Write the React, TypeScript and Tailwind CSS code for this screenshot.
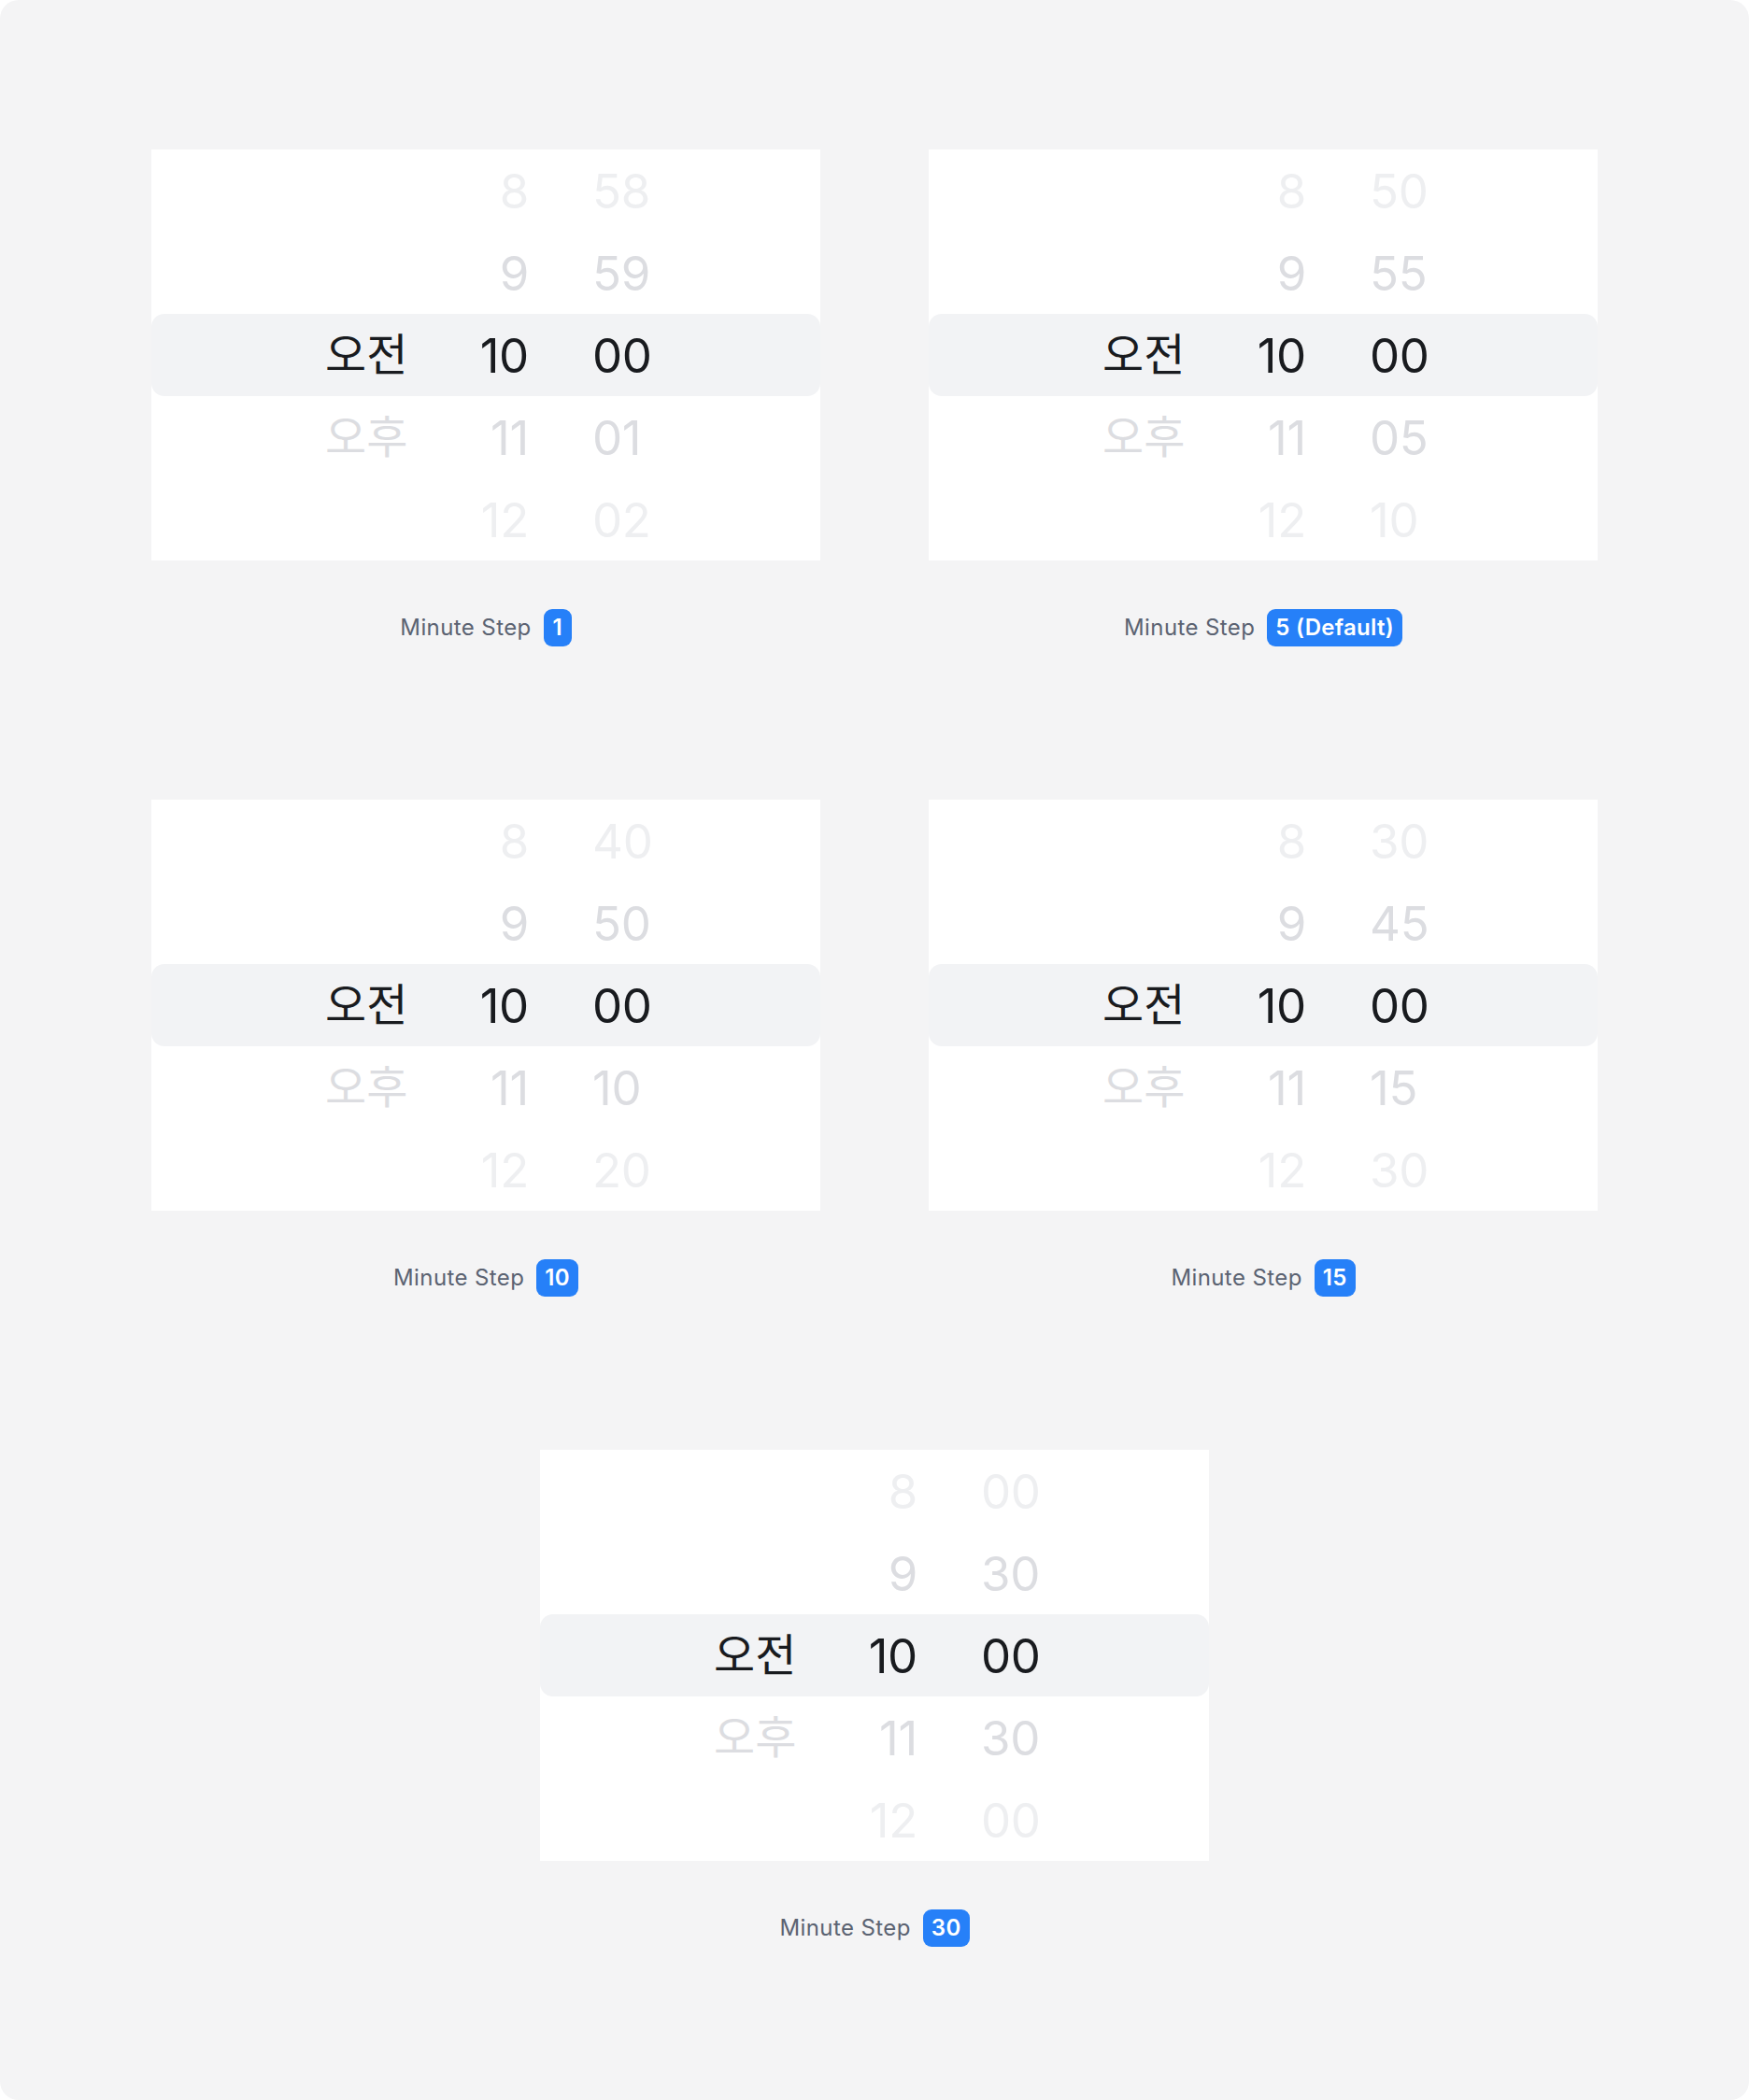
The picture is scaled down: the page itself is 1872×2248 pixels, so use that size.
import React from 'react';

type Wheel = {
  step: string;
  minutes: string[];
};

const wheels: Wheel[] = [
  { step: '1', minutes: ['58', '59', '00', '01', '02'] },
  { step: '5 (Default)', minutes: ['50', '55', '00', '05', '10'] },
  { step: '10', minutes: ['40', '50', '00', '10', '20'] },
  { step: '15', minutes: ['30', '45', '00', '15', '30'] },
  { step: '30', minutes: ['00', '30', '00', '30', '00'] },
];

const hours = ['8', '9', '10', '11', '12'];
const periods = ['', '', '오전', '오후', ''];

// distance from the selected row decides the tint
const tone = ['text-[#eeeff1]', 'text-[#dcdde1]', 'text-[#191b1f]', 'text-[#dcdde1]', 'text-[#eeeff1]'];

const TimeWheel = ({ minutes }: { minutes: string[] }) => {
  return (
    <div className="relative w-[716px] h-[440px] bg-white">
      <div className="absolute left-0 right-0 top-[176px] h-[88px] rounded-[14px] bg-[#f2f3f5]" />
      <div className="relative flex flex-col">
        {minutes.map((m, i) => (
          <div key={i} className={`flex items-center h-[88px] ${tone[i]}`}>
            <div className="ml-[186px] w-[100px] text-[48px] leading-none">{periods[i]}</div>
            <div className="w-[118px] text-right text-[51px] leading-none tracking-[-0.3px]">{hours[i]}</div>
            <div className="ml-[68px] w-[120px] text-[51px] leading-none tracking-[-0.3px]">{m}</div>
          </div>
        ))}
      </div>
    </div>
  );
};

const StepLabel = ({ step }: { step: string }) => {
  return (
    <div className="mt-[52px] flex items-center justify-center gap-[13px]">
      <span className="text-[24px] tracking-[0.4px] text-[#5b6372]">Minute Step</span>
      <span className="h-[40px] min-w-[30px] px-[9px] flex items-center justify-center rounded-[9px] bg-[#2680f8] text-[24px] font-semibold tracking-[0.3px] text-white">
        {step}
      </span>
    </div>
  );
};

export default function App() {
  return (
    <div className="bg-white w-[1872px]" style={{ fontFamily: 'Inter, "Noto Sans CJK KR", sans-serif' }}>
      <div className="h-[2248px] rounded-[20px] bg-[#f4f4f5] px-[162px] pt-[160px]">
        <div className="grid grid-cols-[716px_716px] gap-x-[116px] gap-y-[164px]">
          {wheels.map((w, i) => (
            <div key={w.step} className={i === 4 ? 'col-span-2 justify-self-center flex flex-col' : 'flex flex-col'}>
              <TimeWheel minutes={w.minutes} />
              <StepLabel step={w.step} />
            </div>
          ))}
        </div>
      </div>
    </div>
  );
}
